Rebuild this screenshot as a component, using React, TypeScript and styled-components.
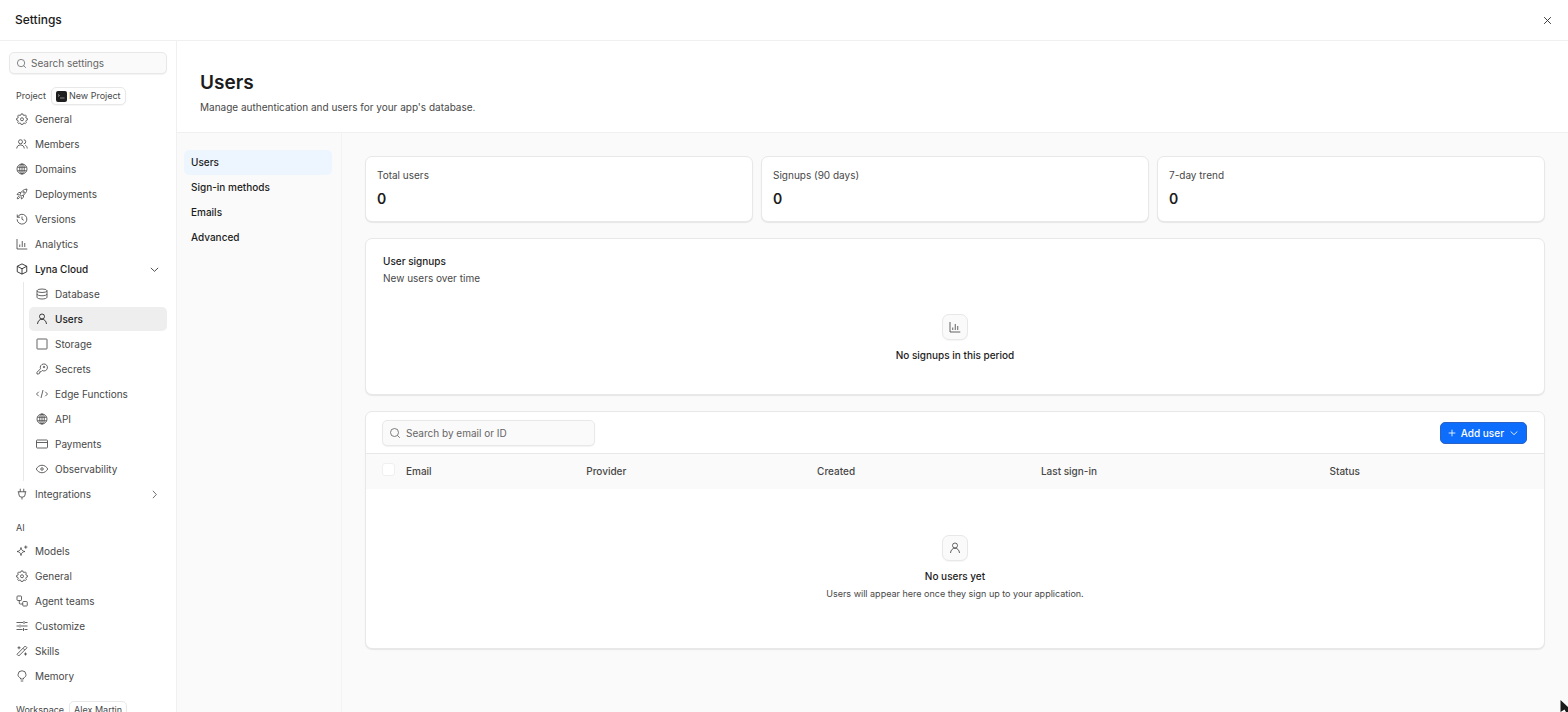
import React from "react";
import styled, { createGlobalStyle, css } from "styled-components";

const c = {
  ink: "#1c1c1c",
  text: "#484848",
  muted: "#666666",
  line: "#f0f0f0",
  border: "#e8e8e8",
  soft: "#fafafa",
  blue: "#0d6efd",
};

const Global = createGlobalStyle`
  *, *::before, *::after { box-sizing: border-box; }
  body { margin: 0; background: #fff; overflow: hidden; }
  body, button, input { font-family: Inter, "Liberation Sans", sans-serif; }
  h1, h2, h3, p, ul { margin: 0; padding: 0; }
  ul { list-style: none; }
`;

const Page = styled.div`
  display: flex;
  flex-direction: column;
  height: 100vh;
  font-size: 10px;
  line-height: 16px;
  color: ${c.text};
`;

const TopBar = styled.header`
  display: flex;
  flex: none;
  align-items: center;
  justify-content: space-between;
  height: 41px;
  padding: 0 13px 0 15px;
  border-bottom: 1px solid ${c.line};
`;

const TopTitle = styled.h2`
  font-size: 12px;
  line-height: 16px;
  font-weight: 500;
  color: ${c.ink};
`;

const IconButton = styled.button`
  display: flex;
  align-items: center;
  justify-content: center;
  width: 16px;
  height: 16px;
  padding: 0;
  border: 0;
  background: none;
  color: #333;
`;

const Body = styled.div`
  display: flex;
  flex: 1;
  min-height: 0;
`;

const Sidebar = styled.nav`
  flex: none;
  width: 177px;
  padding: 11px 9px 0;
  overflow: hidden;
  border-right: 1px solid ${c.line};
`;

const SearchBox = styled.label<{ $large?: boolean }>`
  display: flex;
  align-items: center;
  gap: ${(p) => (p.$large ? 5 : 4)}px;
  width: ${(p) => (p.$large ? "213px" : "auto")};
  height: ${(p) => (p.$large ? 26 : 22)}px;
  padding: 0 6px;
  border: 1px solid ${c.border};
  border-radius: 5px;
  background: ${c.soft};
  box-shadow: 0 1px 1px rgba(0, 0, 0, 0.05);
  color: ${c.muted};

  input {
    flex: 1;
    min-width: 0;
    padding: 0;
    border: 0;
    outline: 0;
    background: none;
    font-size: 10px;
    line-height: 16px;
    color: ${c.ink};
  }
  input::placeholder {
    color: ${c.muted};
    opacity: 1;
  }
`;

const GroupHead = styled.div`
  display: flex;
  align-items: center;
  gap: 5px;
  height: 18px;
  margin-top: 13px;
  padding-left: 7px;
  font-size: 9px;
  color: ${c.text};
`;

const Chip = styled.button`
  display: flex;
  align-items: center;
  gap: 2px;
  height: 18px;
  padding: 0 4px;
  border: 1px solid ${c.border};
  border-radius: 5px;
  background: #fff;
  box-shadow: 0 1px 1px rgba(0, 0, 0, 0.04);
  font-size: 9px;
  line-height: 16px;
  color: ${c.text};
`;

const NavList = styled.ul<{ $nested?: boolean }>`
  display: flex;
  flex-direction: column;
  gap: 1px;
  margin-top: ${(p) => (p.$nested ? 1 : 2)}px;
  ${(p) =>
    p.$nested &&
    css`
      margin-left: 14px;
      padding-left: 5px;
      border-left: 1px solid ${c.border};
    `}
`;

const NavLink = styled.a<{ $active?: boolean; $strong?: boolean }>`
  display: flex;
  align-items: center;
  gap: 7px;
  height: 24px;
  padding: 0 7px;
  border-radius: 5px;
  background: ${(p) => (p.$active ? "#eeeeee" : "transparent")};
  color: ${(p) => (p.$active || p.$strong ? c.ink : c.text)};
  font-weight: ${(p) => (p.$active || p.$strong ? 500 : 400)};
  text-decoration: none;
  white-space: nowrap;

  span {
    flex: 1;
  }
`;

const Content = styled.main`
  display: flex;
  flex: 1;
  flex-direction: column;
  min-width: 0;
`;

const Hero = styled.header`
  flex: none;
  height: 92px;
  padding: 29px 23px 0;
  border-bottom: 1px solid ${c.line};

  h1 {
    margin-bottom: 4px;
    font-size: 19px;
    line-height: 25px;
    font-weight: 600;
    color: ${c.ink};
  }
`;

const Split = styled.div`
  display: flex;
  flex: 1;
  min-height: 0;
  background: ${c.soft};
`;

const SubNav = styled.nav`
  display: flex;
  flex: none;
  flex-direction: column;
  width: 165px;
  padding: 17px 9px 0 7px;
  border-right: 1px solid #f3f3f3;
`;

const SubLink = styled.a<{ $active?: boolean }>`
  height: 25px;
  padding: 0 7px;
  border-radius: 5px;
  background: ${(p) => (p.$active ? "#edf6ff" : "transparent")};
  line-height: 25px;
  font-weight: 500;
  color: ${c.ink};
  text-decoration: none;
`;

const Panels = styled.div`
  display: flex;
  flex: 1;
  flex-direction: column;
  gap: 16px;
  min-width: 0;
  padding: 23px 23px 0;
`;

const Card = styled.section`
  border: 1px solid ${c.border};
  border-radius: 7px;
  background: #fff;
  box-shadow: 0 1px 1px rgba(0, 0, 0, 0.08);
  overflow: hidden;
`;

const Stats = styled.div`
  display: grid;
  grid-template-columns: repeat(3, 1fr);
  gap: 8px;
`;

const Stat = styled(Card)`
  height: 66px;
  padding: 10px 11px;

  strong {
    display: block;
    margin-top: 7px;
    font-size: 14px;
    line-height: 18px;
    font-weight: 600;
    color: ${c.ink};
  }
`;

const ChartCard = styled(Card)`
  height: 157px;
  padding: 14px 17px;

  h2 {
    margin-bottom: 1px;
    font-size: 10px;
    line-height: 16px;
    font-weight: 500;
    color: ${c.ink};
  }
`;

const Empty = styled.div<{ $top: number; $bottom?: number }>`
  display: flex;
  flex-direction: column;
  align-items: center;
  padding: ${(p) => p.$top}px 0 ${(p) => p.$bottom ?? 0}px;
  font-size: 9px;

  h3 {
    margin-top: 7px;
    font-size: 10px;
    line-height: 16px;
    font-weight: 500;
    color: ${c.ink};
  }
  p {
    margin-top: 2px;
  }
`;

const IconTile = styled.div`
  display: flex;
  align-items: center;
  justify-content: center;
  width: 26px;
  height: 26px;
  border: 1px solid ${c.border};
  border-radius: 7px;
  background: ${c.soft};
  box-shadow: 0 1px 1px rgba(0, 0, 0, 0.04);
`;

const Toolbar = styled.div`
  display: flex;
  align-items: center;
  justify-content: space-between;
  height: 41px;
  padding: 0 17px 0 16px;
`;

const Primary = styled.button`
  display: flex;
  align-items: center;
  gap: 5px;
  height: 22px;
  padding: 0 7px;
  border: 1px solid #2b62c4;
  border-radius: 5px;
  background: ${c.blue};
  font-size: 10px;
  line-height: 16px;
  font-weight: 500;
  color: #fff;
`;

const Table = styled.table`
  width: 100%;
  table-layout: fixed;
  border-collapse: collapse;

  thead {
    background: ${c.soft};
  }
  th {
    height: 35px;
    padding: 0;
    border-top: 1px solid ${c.border};
    text-align: left;
    font-weight: 500;
    color: ${c.text};
  }
  th:first-child {
    padding-left: 16px;
  }
  td {
    padding: 0;
  }
`;

const Col = styled.col<{ $w: string }>`
  width: ${(p) => p.$w};
`;

const Check = styled.input`
  display: block;
  appearance: none;
  width: 13px;
  height: 13px;
  margin: 0 0 3px;
  border: 1px solid #efefef;
  border-radius: 3px;
  background: #fff;
`;

const Cursor = styled.svg`
  position: fixed;
  right: 0;
  bottom: 0;
`;

const shapes: Record<string, React.ReactNode> = {
  search: (
    <>
      <circle cx="11" cy="11" r="8" />
      <path d="m17 17 4.5 4.5" />
    </>
  ),
  gear: (
    <>
      <path d="M9.700 4.200 10.400 1.800h3.200l.7 2.400 1.900.8 2.300-1.200 2.200 2.200-1.200 2.300.8 1.900 2.400.7v3.200l-2.400.7-.8 1.900 1.200 2.300-2.200 2.200-2.300-1.200-1.900.8-.7 2.400h-3.200l-.7-2.400-1.900-.8-2.300 1.200-2.200-2.200 1.200-2.300-.8-1.900-2.400-.7v-3.200l2.400-.7.8-1.900-1.200-2.300 2.200-2.200L7.800 5z" />
      <circle cx="12" cy="12.500" r="3" />
    </>
  ),
  members: (
    <>
      <circle cx="9" cy="7.500" r="4" />
      <path d="M1.500 21c.2-4.500 3-7 7.500-7s7.300 2.500 7.500 7" />
      <path d="M15.500 3.500a4 4 0 0 1 0 8M18.500 14.500c2.500 1 3.800 3.500 4 6.500" />
    </>
  ),
  globe: (
    <>
      <circle cx="12" cy="12" r="10" />
      <ellipse cx="12" cy="12" rx="4.500" ry="10" />
      <path d="M3 8.500h18M3 15.500h18M12 2v20" />
    </>
  ),
  rocket: (
    <>
      <path d="M8 13.500C10 7 14.500 2.500 22 2c-.5 7.500-5 12-11.500 14z" />
      <path d="M9.500 9H5.500L2 13l5 1M15 14.500v4L11 22l-1-5" />
      <path d="M6.500 16.500c-3 .5-4 2.500-4 5 2.500 0 4.500-1 5-4" />
      <circle cx="15.500" cy="8.500" r="1.500" />
    </>
  ),
  history: (
    <>
      <path d="M2.500 3v5.500H8" />
      <path d="M3 8.500A9.800 9.800 0 1 1 2.200 12.500" />
      <path d="M12 7v5.500l3.500 2" />
    </>
  ),
  chart: (
    <>
      <path d="M2 2v20h20.500" />
      <path d="M7.500 13v5M12.500 6v12M17.500 10v8" />
    </>
  ),
  cube: (
    <>
      <path d="m12 1.800 9.500 4.700v11L12 22.200l-9.500-4.700v-11z" />
      <path d="m2.500 6.500 9.500 5 9.500-5M12 11.500v10.700" />
    </>
  ),
  database: (
    <>
      <ellipse cx="12" cy="5.500" rx="10" ry="3.500" />
      <path d="M2 5.500v13c0 2 4.500 3.500 10 3.500s10-1.500 10-3.500v-13" />
      <path d="M2 12c0 2 4.500 3.500 10 3.500s10-1.500 10-3.500" />
    </>
  ),
  user: (
    <>
      <circle cx="12" cy="7" r="5" />
      <path d="M3 22c.6-6 4-9.500 9-9.500s8.400 3.500 9 9.500" />
    </>
  ),
  square: <rect x="2" y="2" width="20" height="20" rx="1" />,
  key: (
    <>
      <path d="M15 2a7 7 0 1 1-2.600 13L10 17.500H7.500V20L5.500 22H2v-3.500l7-7A7 7 0 0 1 15 2z" />
      <circle cx="16" cy="8" r="1.500" />
    </>
  ),
  code: <path d="M5.500 7.500 1 12l4.500 4.500M18.500 7.500 23 12l-4.500 4.500M14 4l-4 16" />,
  card: (
    <>
      <rect x="1" y="4" width="22" height="16" rx="1.500" />
      <path d="M1 9h22" />
    </>
  ),
  eye: (
    <>
      <path d="M.5 12C3 7.500 7 4.500 12 4.500S21 7.500 23.500 12C21 16.500 17 19.500 12 19.500S3 16.500.5 12z" />
      <circle cx="12" cy="12" r="2.500" />
    </>
  ),
  plug: <path d="M8.500 1.500v6M15.500 1.500v6M3.500 7.500h17M5.500 7.500v4.500a6.500 6.500 0 0 0 13 0V7.500M12 18.500v4.500" />,
  sparkle: (
    <>
      <path d="M10 5c1 5.500 2.500 7 8 8-5.500 1-7 2.500-8 8-1-5.500-2.500-7-8-8 5.500-1 7-2.500 8-8z" />
      <path d="M19.500 1v6.500M16.300 4.200h6.500" />
    </>
  ),
  agents: (
    <>
      <rect x="2" y="2" width="9" height="9" rx="1.500" />
      <rect x="13.500" y="13" width="9" height="9" rx="1.500" />
      <path d="M6.500 11v5a2 2 0 0 0 2 2h5" />
    </>
  ),
  sliders: (
    <path d="M1 5h13M18 5h5M16 2v6M1 12h5M10 12h13M8 9v6M1 19h12M17 19h6M15 16v6" />
  ),
  wand: (
    <>
      <path d="m2 18.500 16.500-16.500 3.500 3.500L5.500 22zM14 6.500l3.500 3.500" />
      <path d="M6 2.500v6M3 5.500h6M19 15v6M16 18h6" />
    </>
  ),
  bulb: <path d="M9 18v-2C6 14.800 4 12.500 4 9.500a8 8 0 0 1 16 0c0 3-2 5.300-5 6.500v2zM9.500 22h5" />,
  down: <path d="m4 8.500 8 7.500 8-7.500" />,
  right: <path d="m8.500 4 7.500 8-7.500 8" />,
  close: <path d="M3 3l18 18M21 3 3 21" />,
  plus: <path d="M12 2v20M2 12h20" />,
};

function Icon({ name, size = 12, weight = 1.7 }: { name: string; size?: number; weight?: number }) {
  return (
    <svg
      width={size}
      height={size}
      viewBox="0 0 24 24"
      fill="none"
      stroke="currentColor"
      strokeWidth={weight}
      aria-hidden="true"
    >
      {shapes[name]}
    </svg>
  );
}

type Item = { icon: string; label: string; active?: boolean; strong?: boolean; end?: string; children?: Item[] };

const projectItems: Item[] = [
  { icon: "gear", label: "General" },
  { icon: "members", label: "Members" },
  { icon: "globe", label: "Domains" },
  { icon: "rocket", label: "Deployments" },
  { icon: "history", label: "Versions" },
  { icon: "chart", label: "Analytics" },
  {
    icon: "cube",
    label: "Lyna Cloud",
    strong: true,
    end: "down",
    children: [
      { icon: "database", label: "Database" },
      { icon: "user", label: "Users", active: true },
      { icon: "square", label: "Storage" },
      { icon: "key", label: "Secrets" },
      { icon: "code", label: "Edge Functions" },
      { icon: "globe", label: "API" },
      { icon: "card", label: "Payments" },
      { icon: "eye", label: "Observability" },
    ],
  },
  { icon: "plug", label: "Integrations", end: "right" },
];

const aiItems: Item[] = [
  { icon: "sparkle", label: "Models" },
  { icon: "gear", label: "General" },
  { icon: "agents", label: "Agent teams" },
  { icon: "sliders", label: "Customize" },
  { icon: "wand", label: "Skills" },
  { icon: "bulb", label: "Memory" },
];

function Nav({ items, nested }: { items: Item[]; nested?: boolean }) {
  return (
    <NavList $nested={nested}>
      {items.map((item) => (
        <li key={item.label}>
          <NavLink href="#" $active={item.active} $strong={item.strong}>
            <Icon name={item.icon} />
            <span>{item.label}</span>
            {item.end && <Icon name={item.end} size={11} />}
          </NavLink>
          {item.children && <Nav items={item.children} nested />}
        </li>
      ))}
    </NavList>
  );
}

const stats = ["Total users", "Signups (90 days)", "7-day trend"];
const subLinks = ["Users", "Sign-in methods", "Emails", "Advanced"];
const columns = [
  { label: "Email", width: "15.3%" },
  { label: "Provider", width: "19.6%" },
  { label: "Created", width: "19%" },
  { label: "Last sign-in", width: "24.5%" },
  { label: "Status", width: "auto" },
];

export default function App() {
  return (
    <Page>
      <Global />
      <TopBar>
        <TopTitle>Settings</TopTitle>
        <IconButton aria-label="Close">
          <Icon name="close" size={9} weight={2.5} />
        </IconButton>
      </TopBar>
      <Body>
        <Sidebar>
          <SearchBox>
            <Icon name="search" size={11} />
            <input placeholder="Search settings" aria-label="Search settings" />
          </SearchBox>
          <GroupHead>
            Project
            <Chip>
              <svg width="11" height="11" viewBox="0 0 22 22" aria-hidden="true">
                <rect width="22" height="22" rx="4" fill="#1f1f1f" />
                <path d="m4 7 3 2-3 2M8 14h9" stroke="#aaa" strokeWidth="1.500" fill="none" />
              </svg>
              New Project
            </Chip>
          </GroupHead>
          <Nav items={projectItems} />
          <GroupHead>AI</GroupHead>
          <Nav items={aiItems} />
          <GroupHead>
            Workspace
            <Chip>Alex Martin</Chip>
          </GroupHead>
        </Sidebar>
        <Content>
          <Hero>
            <h1>Users</h1>
            <p>Manage authentication and users for your app's database.</p>
          </Hero>
          <Split>
            <SubNav>
              {subLinks.map((label, i) => (
                <SubLink key={label} href="#" $active={i === 0}>
                  {label}
                </SubLink>
              ))}
            </SubNav>
            <Panels>
              <Stats>
                {stats.map((label) => (
                  <Stat key={label}>
                    {label}
                    <strong>0</strong>
                  </Stat>
                ))}
              </Stats>
              <ChartCard>
                <h2>User signups</h2>
                <p>New users over time</p>
                <Empty $top={28}>
                  <IconTile>
                    <Icon name="chart" />
                  </IconTile>
                  <h3>No signups in this period</h3>
                </Empty>
              </ChartCard>
              <Card>
                <Toolbar>
                  <SearchBox $large>
                    <Icon name="search" />
                    <input placeholder="Search by email or ID" aria-label="Search by email or ID" />
                  </SearchBox>
                  <Primary>
                    <Icon name="plus" size={8} weight={2.5} />
                    Add user
                    <Icon name="down" size={10} weight={2} />
                  </Primary>
                </Toolbar>
                <Table>
                  <colgroup>
                    <Col $w="40px" />
                    {columns.map((col) => (
                      <Col key={col.label} $w={col.width} />
                    ))}
                  </colgroup>
                  <thead>
                    <tr>
                      <th>
                        <Check type="checkbox" aria-label="Select all users" />
                      </th>
                      {columns.map((col) => (
                        <th key={col.label}>{col.label}</th>
                      ))}
                    </tr>
                  </thead>
                  <tbody>
                    <tr>
                      <td colSpan={6}>
                        <Empty $top={46} $bottom={46}>
                          <IconTile>
                            <Icon name="user" />
                          </IconTile>
                          <h3>No users yet</h3>
                          <p>Users will appear here once they sign up to your application.</p>
                        </Empty>
                      </td>
                    </tr>
                  </tbody>
                </Table>
              </Card>
            </Panels>
          </Split>
        </Content>
      </Body>
      <Cursor width="8" height="12" viewBox="0 0 8 12" aria-hidden="true">
        <path d="M.5 0 8 7v5H6L4.500 9.500.5 12z" fill="#1a1a1a" />
      </Cursor>
    </Page>
  );
}
